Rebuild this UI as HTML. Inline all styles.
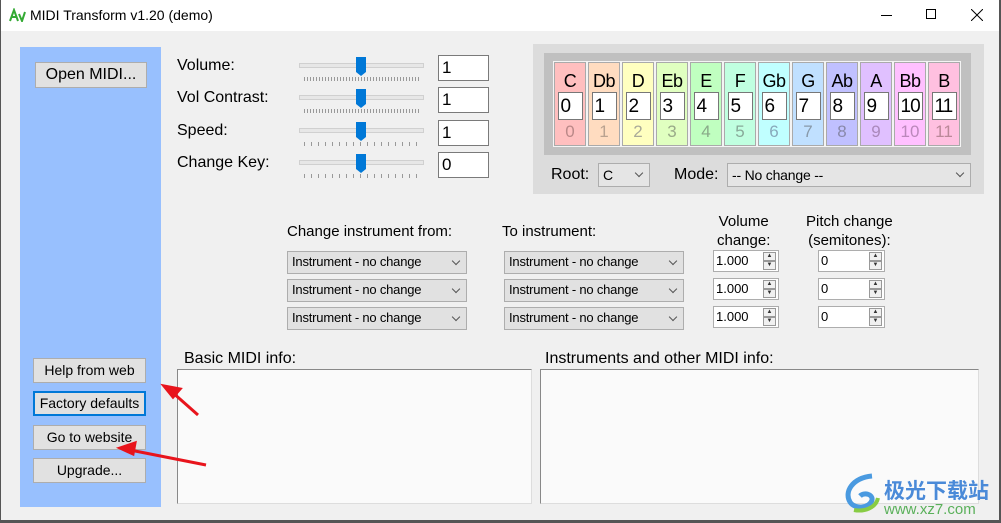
<!DOCTYPE html>
<html><head><meta charset="utf-8"><style>
*{box-sizing:border-box;margin:0;padding:0}
body{width:1001px;height:523px;position:relative;overflow:hidden;background:#f0f0f0;font-family:"Liberation Sans",Arial,sans-serif;color:#000}
.a{position:absolute}
.t{position:absolute;font-size:16px;white-space:nowrap}
.btn{position:absolute;background:#e1e1e1;border:1px solid #adadad;font-size:14px;text-align:center}
.inp{position:absolute;background:#fff;border:1px solid #7a7a7a;font-size:17px;padding-left:3px}
.sel{position:absolute;background:#e1e1e1;border:1px solid #adadad;font-size:13px;padding-left:4px;line-height:20px;letter-spacing:-0.2px}
.sel:after{content:"";position:absolute;right:7px;top:6px;width:5px;height:5px;border-right:1px solid #555;border-bottom:1px solid #555;transform:rotate(45deg)}
.spin{position:absolute;background:#fff;border:1px solid #adadad;font-size:13px;padding-left:2px;line-height:19px}
.spin i{position:absolute;right:2px;width:13px;height:9px;border:1px solid #999;background:#f0f0f0;font-style:normal;font-size:6px;line-height:7px;text-align:center;color:#333}
.key{position:absolute;top:62px;width:32px;height:84px;text-align:center;border:1px solid #aaa}
.key b{display:block;font-weight:normal;font-size:18px;margin-top:8px;height:20px;letter-spacing:-0.5px}
.key span{display:block;margin:1px auto 0;width:25px;height:28px;background:#fff;border:1px solid #777;font-size:19px;text-align:left;padding-left:2px;line-height:28px;letter-spacing:-1px}
.key em{display:block;font-style:normal;font-size:17px;margin-top:2px}
</style></head><body>
<div class="a" style="left:0;top:0;width:1001px;height:31px;background:#fff"></div>
<div class="a" style="left:0;top:0;width:1px;height:523px;background:#555"></div>
<div class="a" style="left:0;top:520px;width:1001px;height:3px;background:#555"></div>
<div class="a" style="left:999px;top:0;width:2px;height:523px;background:#555"></div>
<svg class="a" style="left:9px;top:8px" width="18" height="14"><path d="M1 13L5 2L9 13M3 9h5M10 6l3 7l3-9" fill="none" stroke="#3a3" stroke-width="2"/></svg>
<div class="t" style="left:30px;top:7px;font-size:14px">MIDI Transform v1.20 (demo)</div>
<div class="a" style="left:881px;top:15px;width:11px;height:1px;background:#000"></div>
<div class="a" style="left:926px;top:9px;width:10px;height:10px;border:1px solid #000"></div>
<svg class="a" style="left:971px;top:9px" width="12" height="12"><path d="M0 0L12 12M12 0L0 12" stroke="#000" stroke-width="1"/></svg>

<div class="a" style="left:20px;top:47px;width:141px;height:460px;background:#98c0fe"></div>
<div class="btn" style="left:35px;top:62px;width:112px;height:26px;font-size:16px;line-height:24px">Open MIDI...</div>
<div class="btn" style="left:33px;top:358px;width:113px;height:25px;line-height:23px">Help from web</div>
<div class="btn" style="left:33px;top:391px;width:113px;height:25px;line-height:21px;border:2px solid #0078d7">Factory defaults</div>
<div class="btn" style="left:33px;top:425px;width:113px;height:25px;line-height:23px">Go to website</div>
<div class="btn" style="left:33px;top:458px;width:113px;height:25px;line-height:23px">Upgrade...</div>

<div class="t" style="left:177px;top:57px">Volume:</div>
<div class="t" style="left:177px;top:89px">Vol Contrast:</div>
<div class="t" style="left:177px;top:122px">Speed:</div>
<div class="t" style="left:177px;top:154px">Change Key:</div>
<svg class="a" style="left:299px;top:55px" width="130" height="130">
<g fill="#e7e7e7" stroke="#d0d0d0">
<rect x="0.5" y="8.5" width="124" height="4"/><rect x="0.5" y="40.5" width="124" height="4"/><rect x="0.5" y="73.5" width="124" height="4"/><rect x="0.5" y="105.5" width="124" height="4"/></g>
<g stroke="#999" stroke-dasharray="1 2"><line x1="5" y1="24" x2="120" y2="24" stroke-width="4"/><line x1="5" y1="56" x2="120" y2="56" stroke-width="4"/></g>
<g stroke="#999" stroke-dasharray="1 6"><line x1="5" y1="89" x2="120" y2="89" stroke-width="4"/><line x1="5" y1="121" x2="120" y2="121" stroke-width="4"/></g>
<g fill="#0078d7"><path d="M57 2h10v15l-5 4l-5-4z"/><path d="M57 34h10v15l-5 4l-5-4z"/><path d="M57 67h10v15l-5 4l-5-4z"/><path d="M57 99h10v15l-5 4l-5-4z"/></g>
</svg>
<div class="inp" style="left:438px;top:55px;width:51px;height:26px;line-height:24px">1</div>
<div class="inp" style="left:438px;top:87px;width:51px;height:26px;line-height:24px">1</div>
<div class="inp" style="left:438px;top:120px;width:51px;height:26px;line-height:24px">1</div>
<div class="inp" style="left:438px;top:152px;width:51px;height:26px;line-height:24px">0</div>

<div class="a" style="left:533px;top:44px;width:451px;height:150px;background:#dcdcdc"></div>
<div class="a" style="left:544px;top:53px;width:427px;height:102px;background:#c0c0c0"></div>
<div class="a" style="left:553px;top:61px;width:408px;height:86px;background:#f4f4f4"></div>
<div class="key" style="left:554px;background:#ffbfbf"><b>C</b><span>0</span><em style="color:#b88">0</em></div>
<div class="key" style="left:588px;background:#ffdcc0"><b>Db</b><span>1</span><em style="color:#b9a290">1</em></div>
<div class="key" style="left:622px;background:#ffffc0"><b>D</b><span>2</span><em style="color:#aa9">2</em></div>
<div class="key" style="left:656px;background:#e0ffc0"><b>Eb</b><span>3</span><em style="color:#9a8">3</em></div>
<div class="key" style="left:690px;background:#c0ffc0"><b>E</b><span>4</span><em style="color:#8a8">4</em></div>
<div class="key" style="left:724px;background:#c0ffe0"><b>F</b><span>5</span><em style="color:#8a9">5</em></div>
<div class="key" style="left:758px;background:#c0ffff"><b>Gb</b><span>6</span><em style="color:#8ab">6</em></div>
<div class="key" style="left:792px;background:#c0e0ff"><b>G</b><span>7</span><em style="color:#89a">7</em></div>
<div class="key" style="left:826px;background:#c0c0ff"><b>Ab</b><span>8</span><em style="color:#88a">8</em></div>
<div class="key" style="left:860px;background:#e0c0ff"><b>A</b><span>9</span><em style="color:#a8b">9</em></div>
<div class="key" style="left:894px;background:#ffc0ff"><b>Bb</b><span>10</span><em style="color:#b8b">10</em></div>
<div class="key" style="left:928px;background:#ffc0e0"><b>B</b><span>11</span><em style="color:#b89">11</em></div>
<div class="t" style="left:551px;top:166px">Root:</div>
<div class="sel" style="left:598px;top:163px;width:52px;height:24px;background:#e5e5e5;font-size:14px;line-height:22px">C</div>
<div class="t" style="left:674px;top:166px">Mode:</div>
<div class="sel" style="left:727px;top:163px;width:244px;height:24px;background:#e5e5e5;font-size:14px;line-height:22px">-- No change --</div>

<div class="t" style="left:287px;top:223px;font-size:15px">Change instrument from:</div>
<div class="t" style="left:502px;top:223px;font-size:15px">To instrument:</div>
<div class="t" style="left:717px;top:212px;font-size:15px;text-align:center;line-height:19px">Volume<br>change:</div>
<div class="t" style="left:806px;top:212px;font-size:15px;text-align:center;line-height:19px">Pitch change<br>(semitones):</div>
<div class="sel" style="left:287px;top:251px;width:180px;height:23px">Instrument - no change</div>
<div class="sel" style="left:287px;top:279px;width:180px;height:23px">Instrument - no change</div>
<div class="sel" style="left:287px;top:307px;width:180px;height:23px">Instrument - no change</div>
<div class="sel" style="left:504px;top:251px;width:180px;height:23px">Instrument - no change</div>
<div class="sel" style="left:504px;top:279px;width:180px;height:23px">Instrument - no change</div>
<div class="sel" style="left:504px;top:307px;width:180px;height:23px">Instrument - no change</div>
<div class="spin" style="left:713px;top:250px;width:66px;height:22px">1.000<i style="top:1px">▲</i><i style="top:10px">▼</i></div>
<div class="spin" style="left:713px;top:278px;width:66px;height:22px">1.000<i style="top:1px">▲</i><i style="top:10px">▼</i></div>
<div class="spin" style="left:713px;top:306px;width:66px;height:22px">1.000<i style="top:1px">▲</i><i style="top:10px">▼</i></div>
<div class="spin" style="left:818px;top:250px;width:67px;height:22px">0<i style="top:1px">▲</i><i style="top:10px">▼</i></div>
<div class="spin" style="left:818px;top:278px;width:67px;height:22px">0<i style="top:1px">▲</i><i style="top:10px">▼</i></div>
<div class="spin" style="left:818px;top:306px;width:67px;height:22px">0<i style="top:1px">▲</i><i style="top:10px">▼</i></div>

<div class="t" style="left:184px;top:350px">Basic MIDI info:</div>
<div class="t" style="left:545px;top:350px">Instruments and other MIDI info:</div>
<div class="a" style="left:177px;top:369px;width:355px;height:135px;background:#fafafa;border:1px solid #888;border-right-color:#ddd;border-bottom-color:#ddd"></div>
<div class="a" style="left:540px;top:369px;width:439px;height:135px;background:#fafafa;border:1px solid #888;border-right-color:#ddd;border-bottom-color:#ddd"></div>

<svg class="a" style="left:0;top:0" width="1001" height="523">
<g stroke="#e8141c" stroke-width="3" fill="#e8141c">
<line x1="198" y1="415" x2="172" y2="392"/><path d="M164 386l16 3l-7 8z"/>
<line x1="206" y1="465" x2="130" y2="450"/><path d="M120 448l15-5l-2 11z"/>
</g></svg>
<div class="t" style="left:884px;top:475px;font-size:21px;font-weight:bold;color:#4a8ad8;font-family:'Noto Sans CJK SC',sans-serif">极光下载站</div>
<div class="t" style="left:884px;top:501px;font-size:15px;color:#5ab05a">www.xz7.com</div>
<svg class="a" style="left:842px;top:472px" width="40" height="42"><path d="M30 4C10 6 2 20 8 30c5 8 20 6 22-2c1-6-8-8-12-4" fill="none" stroke="#4a9ae0" stroke-width="5"/><path d="M12 38c10 2 22-2 24-12" fill="none" stroke="#8c4" stroke-width="4"/></svg>
</body></html>
